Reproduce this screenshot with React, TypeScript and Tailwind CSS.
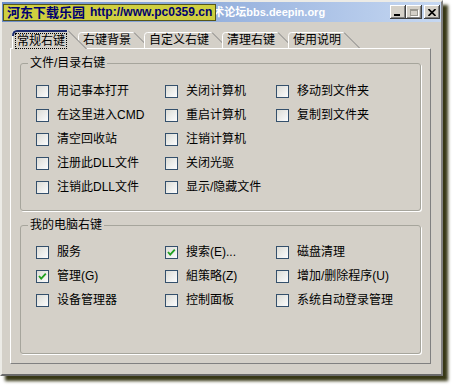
import React from "react";

const groupOne = [
  ["用记事本打开", "在这里进入CMD", "清空回收站", "注册此DLL文件", "注销此DLL文件"],
  ["关闭计算机", "重启计算机", "注销计算机", "关闭光驱", "显示/隐藏文件"],
  ["移动到文件夹", "复制到文件夹"],
];

const groupTwo: [string, boolean][][] = [
  [["服务", false], ["管理(G)", true], ["设备管理器", false]],
  [["搜索(E)...", true], ["組策略(Z)", false], ["控制面板", false]],
  [["磁盘清理", false], ["增加/删除程序(U)", false], ["系统自动登录管理", false]],
];

function CheckBox({ checked }: { checked?: boolean }) {
  return (
    <span className="relative w-[13px] h-[13px] shrink-0 border border-[#34506c] bg-gradient-to-br from-[#dcdcd6] to-[#fbfcfe]">
      {checked && (
        <svg width="11" height="11" viewBox="0 0 11 11" className="absolute left-0 top-0">
          <polyline points="2,5 4.2,7.6 8.8,2.6" fill="none" stroke="#21a121" strokeWidth="1.8" />
        </svg>
      )}
    </span>
  );
}

function Row({ label, checked }: { label: string; checked?: boolean }) {
  return (
    <div className="flex items-center h-[24px] gap-[8px] whitespace-nowrap">
      <CheckBox checked={checked} />
      <span>{label}</span>
    </div>
  );
}

// w = text width; the tab has a flat top of w + 8 and then a 45deg slope
function Tab({ label, selected, w, box }: { label: string; selected?: boolean; w: number; box: string }) {
  const h = selected ? 19 : 16;
  const flat = w + 8;
  const total = flat + h;
  return (
    <div
      className={
        (selected
          ? "relative h-[19px] mb-[-1px] mr-[-9px] z-10 flex items-center pl-[3px] shrink-0 "
          : "relative h-[16px] mr-[-6px] flex items-center pl-[5px] shrink-0 ") + box
      }
    >
      <svg width={total} height={h} className="absolute left-0 top-0">
        <path d={`M0,${h} V3 Q0,0 3,0 H${flat} L${total},${h} Z`} fill="#d4d0c8" />
        <path d={`M0.5,${h} V3.5 Q0.5,0.5 3.5,0.5 H${flat}`} fill="none" stroke="#ffffff" />
        <path d={`M${flat},0.5 L${total - 0.5},${h}`} fill="none" stroke="#808080" />
        {selected && (
          <path d={`M1,6 Q1,1 5,1 H${flat - 1}`} fill="none" stroke="#1e2d6e" strokeWidth="2" />
        )}
      </svg>
      <span
        className={
          selected
            ? "relative leading-[14px] px-[1px] border border-dotted border-black mt-[2px] whitespace-nowrap"
            : "relative leading-[14px] whitespace-nowrap"
        }
      >
        {label}
      </span>
    </div>
  );
}

function TitleButton({ children, className = "" }: { children: React.ReactNode; className?: string }) {
  return (
    <div
      className={
        "w-[16px] h-[14px] bg-[#d4d0c8] flex items-center justify-center shadow-[inset_-1px_-1px_#404040,inset_1px_1px_#ffffff,inset_-2px_-2px_#808080] " +
        className
      }
    >
      {children}
    </div>
  );
}

export default function App() {
  return (
    <div className="w-[456px] h-[389px] bg-white overflow-hidden font-['Liberation_Sans','Noto_Sans_CJK_SC',sans-serif] text-[12px] text-black">
      <div className="w-[443px] h-[376px] bg-[#d4d0c8] border-2 border-t-[#ecebe6] border-l-[#ecebe6] border-r-[#808080] border-b-[#6a6a6a] shadow-[5px_5px_3px_rgba(45,45,10,0.95)]">
        {/* title bar */}
        <div className="h-[20px] flex items-center pl-[1px] pr-[1px] bg-gradient-to-r from-[#6a8cc8] to-[#c6d8f2]">
          <div className="relative z-10 h-[17px] px-[3px] flex items-center bg-[#cfcf3f] border border-[#55551a] text-[#000070] font-bold whitespace-nowrap">
            <span className="text-[13px] leading-[15px]">河东下载乐园</span>
            <span className="ml-[5px] text-[12px] leading-[14px]">http://www.pc0359.cn</span>
          </div>
          <div className="-ml-[3px] text-white font-bold text-[11px] whitespace-nowrap">术论坛bbs.deepin.org</div>
          <div className="ml-auto flex items-center">
            <TitleButton>
              <span className="w-[6px] h-[2px] bg-black mt-[6px] mr-[2px]" />
            </TitleButton>
            <TitleButton>
              <span className="w-[8px] h-[7px] border border-[#9a9890] border-t-2 shadow-[1px_1px_0_#ffffff]" />
            </TitleButton>
            <TitleButton className="ml-[2px]">
              <svg width="8" height="7" viewBox="0 0 8 7">
                <path d="M0.5,0 L7.5,7 M7.5,0 L0.5,7" stroke="#000" strokeWidth="1.6" />
              </svg>
            </TitleButton>
          </div>
        </div>

        {/* tabs */}
        <div className="relative z-10 mt-[8px] h-[18px] pl-[10px] flex items-end">
          <Tab label="常规右键" w={48} box="w-[75px]" selected />
          <Tab label="右键背景" w={48} box="w-[72px]" />
          <Tab label="自定义右键" w={60} box="w-[84px]" />
          <Tab label="清理右键" w={48} box="w-[72px]" />
          <Tab label="使用说明" w={48} box="w-[72px]" />
        </div>

        {/* panel */}
        <div className="ml-[8px] w-[421px] h-[316px] border border-t-white border-l-white border-r-[#808080] border-b-[#808080] pt-[6px] pl-[9px]">
          <fieldset className="w-[401px] border border-[#a6a59c] rounded-[3px] shadow-[1px_1px_0_#ffffff] pt-[8px] pb-[11px]">
            <legend className="ml-[7px] px-[2px] leading-[16px]">文件/目录右键</legend>
            <div className="grid grid-cols-[129px_111px_1fr] pl-[15px]">
              {groupOne.map((col, i) => (
                <div key={i} className="flex flex-col">
                  {col.map((label) => (
                    <Row key={label} label={label} />
                  ))}
                </div>
              ))}
            </div>
          </fieldset>

          <fieldset className="mt-[6px] w-[401px] border border-[#a6a59c] rounded-[3px] shadow-[1px_1px_0_#ffffff] pt-[7px] pb-[41px]">
            <legend className="ml-[7px] px-[2px] leading-[16px]">我的电脑右键</legend>
            <div className="grid grid-cols-[129px_111px_1fr] pl-[15px]">
              {groupTwo.map((col, i) => (
                <div key={i} className="flex flex-col">
                  {col.map(([label, checked]) => (
                    <Row key={label} label={label} checked={checked} />
                  ))}
                </div>
              ))}
            </div>
          </fieldset>
        </div>
      </div>
    </div>
  );
}
